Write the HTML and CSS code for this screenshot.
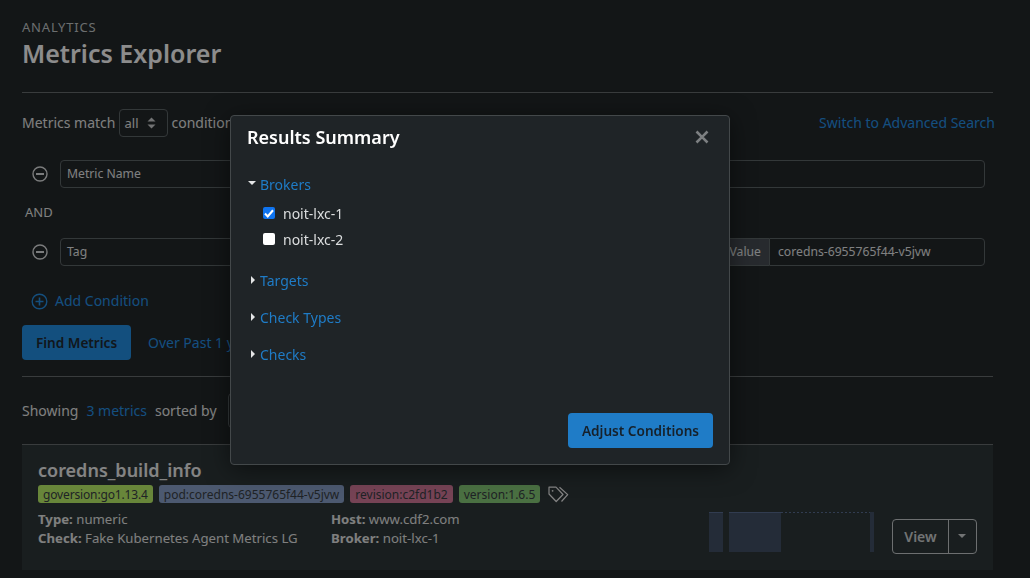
FILE: index.html
```html
<!DOCTYPE html>
<html lang="en">
<head>
  <meta charset="UTF-8">
  <meta name="viewport" content="width=device-width, initial-scale=1.0">
  <title>Metrics Explorer</title>
  <link rel="stylesheet" href="styles.css">
</head>
<body>
  <main class="page">
    <div class="eyebrow">ANALYTICS</div>
    <h1 class="page-title">Metrics Explorer</h1>
    <hr class="rule">

    <div class="match-row">
      <div class="match-left">
        <span>Metrics match</span>
        <span class="select select-all">all
          <svg class="updown" width="9" height="12" viewBox="0 0 9 12"><path d="M4.5 0.5 8.5 4.5H0.5ZM4.5 11.5 0.5 7.5H8.5Z" fill="currentColor"/></svg>
        </span>
        <span>conditions</span>
      </div>
      <a class="link link-advanced">Switch to Advanced Search</a>
    </div>

    <div class="cond-row">
      <svg class="cond-icon" width="16" height="16" viewBox="0 0 16 16"><circle cx="8" cy="8" r="7" fill="none" stroke="currentColor" stroke-width="1.4"/><path d="M4 8h8" stroke="currentColor" stroke-width="2"/></svg>
      <div class="field field-grow">Metric Name</div>
    </div>
    <div class="and-label">AND</div>
    <div class="cond-row">
      <svg class="cond-icon" width="16" height="16" viewBox="0 0 16 16"><circle cx="8" cy="8" r="7" fill="none" stroke="currentColor" stroke-width="1.4"/><path d="M4 8h8" stroke="currentColor" stroke-width="2"/></svg>
      <div class="field-group">
        <div class="field field-grow field-joined">Tag</div>
        <div class="addon">Value</div>
        <div class="field field-value">coredns-6955765f44-v5jvw</div>
      </div>
    </div>

    <a class="add-cond">
      <svg width="17" height="17" viewBox="0 0 17 17"><circle cx="8.5" cy="8.5" r="7.3" fill="none" stroke="currentColor" stroke-width="1.4"/><path d="M4.5 8.5h8M8.5 4.5v8" stroke="currentColor" stroke-width="1.6"/></svg>
      Add Condition
    </a>

    <div class="find-row">
      <button class="btn-primary btn-find">Find Metrics</button>
      <a class="link">Over Past 1 year</a>
    </div>
    <hr class="rule rule-find">

    <div class="showing-row">
      <span>Showing</span>
      <a class="link">3 metrics</a>
      <span>sorted by</span>
      <span class="select select-sort">Name</span>
    </div>

    <section class="card">
      <div class="card-main">
        <h2 class="metric-name">coredns_build_info</h2>
        <div class="tags">
          <span class="tag tag-olive">goversion:go1.13.4</span>
          <span class="tag tag-slate">pod:coredns-6955765f44-v5jvw</span>
          <span class="tag tag-rose">revision:c2fd1b2</span>
          <span class="tag tag-green">version:1.6.5</span>
          <svg class="tag-icon" width="21" height="17" viewBox="0 0 21 17" fill="none" stroke="currentColor" stroke-width="1.2" stroke-linejoin="round"><path d="M1 1.2h7l7 7.3-6.8 7L1 8Z"/><path d="M11.5 1.2 19.7 8.6 13.5 15.5"/><circle cx="4.6" cy="4.8" r="0.9" fill="currentColor" stroke="none"/></svg>
        </div>
        <div class="details">
          <div class="detail-col detail-left">
            <div><b>Type:</b> numeric</div>
            <div><b>Check:</b> Fake Kubernetes Agent Metrics LG</div>
          </div>
          <div class="detail-col">
            <div><b>Host:</b> www.cdf2.com</div>
            <div><b>Broker:</b> noit-lxc-1</div>
          </div>
        </div>
      </div>
      <svg class="spark" width="166" height="40" viewBox="0 0 166 40">
        <path d="M0 0h14v40H0ZM20 0h52v40H20ZM161 0h4v40h-4Z" fill="#435066"/>
        <path d="M0 .5h14M20 .5h52" stroke="#5a6d92"/>
        <path d="M72 .5h89" stroke="#5a6d92" stroke-dasharray="2 2"/>
      </svg>
      <div class="view-btn">
        <span class="view-label">View</span>
        <span class="view-caret"></span>
      </div>
    </section>
  </main>

  <div class="backdrop"></div>

  <div class="modal">
    <div class="modal-head">
      <h3 class="modal-title">Results Summary</h3>
      <svg class="modal-close" width="14" height="14" viewBox="0 0 14 14"><path d="M1.5 1.5l11 11M12.5 1.5l-11 11" stroke="currentColor" stroke-width="2.6"/></svg>
    </div>
    <div class="modal-body">
      <div class="section">
        <div class="section-head"><span class="caret-down"></span><a class="modal-link">Brokers</a></div>
        <div class="check-list">
          <label class="check-item">
            <span class="box box-on">
              <svg width="10" height="9" viewBox="0 0 10 9"><path d="M1 4.6 3.7 7.4 9 1.2" fill="none" stroke="#fff" stroke-width="2.1"/></svg>
            </span>
            noit-lxc-1
          </label>
          <label class="check-item"><span class="box"></span>noit-lxc-2</label>
        </div>
      </div>
      <div class="section"><div class="section-head"><span class="caret-right"></span><a class="modal-link">Targets</a></div></div>
      <div class="section"><div class="section-head"><span class="caret-right"></span><a class="modal-link">Check Types</a></div></div>
      <div class="section"><div class="section-head"><span class="caret-right"></span><a class="modal-link">Checks</a></div></div>
    </div>
    <div class="modal-foot">
      <button class="btn-primary btn-adjust">Adjust Conditions</button>
    </div>
  </div>
</body>
</html>
```

FILE: styles.css
```css
* {
  box-sizing: border-box;
}

html, body {
  height: 100%;
}

body {
  margin: 0;
  background-color: #23282a;
  color: #e8e8e8;
  font-family: "Noto Sans", sans-serif;
  font-size: 14px;
  overflow: hidden;
}

a {
  cursor: pointer;
}

.page {
  padding: 20px 37px 0 22px;
}

.eyebrow {
  font-size: 13px;
  line-height: 15px;
  letter-spacing: 0.8px;
  color: #c4c8ca;
}

.page-title {
  margin: 2px 0 0;
  font-size: 25px;
  line-height: 33px;
  font-weight: 600;
  color: #fff;
}

.rule {
  margin: 22px 0 0;
  border: 0;
  border-top: 1px solid #696e70;
}

.link {
  color: #2691e7;
}

.link-advanced {
  margin-right: -2px;
}

.match-row {
  display: flex;
  justify-content: space-between;
  align-items: center;
  margin-top: 15px;
  height: 29px;
}

.match-left {
  display: flex;
  align-items: center;
  gap: 4px;
}

.select {
  display: inline-flex;
  align-items: center;
  border: 1px solid #5e6669;
  border-radius: 4px;
}

.select-all {
  width: 49px;
  height: 28px;
  margin-right: -1px;
  padding-left: 4px;
  gap: 8px;
  font-size: 13px;
}

.updown {
  color: #d0d2d3;
}

.cond-row {
  display: flex;
  align-items: center;
  gap: 12px;
  margin: 23px 8px 0 10px;
}

.cond-icon {
  flex: none;
  color: #e0e2e3;
}

.field {
  height: 28px;
  padding: 0 6px 1px;
  display: flex;
  align-items: center;
  border: 1px solid #5e6669;
  border-radius: 4px;
  font-size: 12.2px;
  color: #e8eaeb;
}

.field-grow {
  flex: 1;
}

.field-group {
  flex: 1;
  display: flex;
}

.field-joined {
  border-radius: 4px 0 0 4px;
}

.addon {
  height: 28px;
  width: 60px;
  padding: 0 8px 1px;
  display: flex;
  align-items: center;
  justify-content: flex-end;
  background-color: #474e54;
  border-top: 1px solid #5e6669;
  border-bottom: 1px solid #5e6669;
  font-size: 12.2px;
  color: #e8eaeb;
}

.field-value {
  width: 216px;
  padding: 0 8px 1px;
  border-radius: 0 4px 4px 0;
}

.and-label {
  margin: 15px 0 -6px 3px;
  font-size: 13px;
  line-height: 18px;
}

.add-cond {
  display: flex;
  align-items: center;
  gap: 7px;
  margin: 25px 0 0 9px;
  color: #2691e7;
  line-height: 20px;
}

.btn-primary {
  border: 0;
  border-radius: 4px;
  background-color: #1f7cc7;
  color: #16212b;
  font-family: inherit;
  font-size: 13.6px;
  font-weight: 600;
  cursor: pointer;
}

.btn-find {
  width: 109px;
  height: 35px;
  background-color: #2491e5;
  color: #1f2a33;
}

.find-row {
  display: flex;
  align-items: center;
  gap: 17px;
  margin-top: 14px;
}

.rule-find {
  margin-top: 16px;
}

.showing-row {
  display: flex;
  align-items: center;
  gap: 8px;
  margin-top: 15px;
  height: 36px;
}

.select-sort {
  width: 130px;
  height: 35px;
  margin-top: 1px;
  margin-left: 3px;
  padding-left: 8px;
}

.card {
  position: relative;
  display: flex;
  align-items: flex-end;
  height: 126px;
  margin-top: 16px;
  padding: 0 16px 16px;
  background-color: #2f383a;
  border-top: 1px solid #696e70;
}

.card-main {
  align-self: flex-start;
  flex: 1;
  padding-top: 12px;
}

.metric-name {
  margin: 0;
  font-size: 18px;
  line-height: 26px;
  font-weight: 600;
  color: #f0f0f0;
}

.tags {
  display: flex;
  align-items: center;
  gap: 6px;
  margin-top: 2px;
}

.tag {
  height: 18px;
  padding: 0 5px;
  display: flex;
  align-items: center;
  border-radius: 3px;
  font-size: 12px;
  white-space: nowrap;
  color: #3a4045;
}

.tag-olive {
  background-color: #bef46a;
  letter-spacing: -0.15px;
}

.tag-slate {
  background-color: #8aa2cc;
}

.tag-rose {
  background-color: #d87a9c;
}

.tag-green {
  background-color: #88cc78;
}

.tag-icon {
  margin-left: 2px;
  color: #f0f0f0;
}

.details {
  display: flex;
  margin-top: 7px;
  font-size: 13.2px;
  line-height: 19px;
  color: #e8e8e8;
}

.detail-left {
  width: 293px;
}

.spark {
  position: absolute;
  left: 687px;
  top: 67px;
}

.view-btn {
  display: flex;
  align-items: stretch;
  width: 85px;
  height: 35px;
  border: 1px solid #c6cbcd;
  border-radius: 4px;
  color: #d0d3d4;
  font-weight: 600;
}

.view-label {
  width: 56px;
  display: flex;
  align-items: center;
  justify-content: center;
  border-right: 1px solid #c6cbcd;
}

.view-caret {
  flex: 1;
  position: relative;
}

.view-caret::after {
  content: "";
  position: absolute;
  left: 9px;
  top: 14px;
  border-left: 4px solid transparent;
  border-right: 4px solid transparent;
  border-top: 4px solid #d0d3d4;
}

.backdrop {
  position: fixed;
  inset: 0;
  background-color: rgba(0, 0, 0, 0.45);
}

.modal {
  position: absolute;
  left: 230px;
  top: 115px;
  width: 500px;
  height: 350px;
  display: flex;
  flex-direction: column;
  background-color: #1f2427;
  border: 1px solid #43484a;
  border-radius: 4px;
  box-shadow: 0 4px 24px rgba(0, 0, 0, 0.5);
}

.modal-head {
  display: flex;
  justify-content: space-between;
  align-items: center;
  padding: 8px 20px 0 16px;
}

.modal-title {
  margin: 0;
  font-size: 18px;
  line-height: 26px;
  font-weight: 600;
  color: #fff;
}

.modal-close {
  color: #7d8082;
}

.modal-body {
  flex: 1;
  padding: 24px 16px 0;
}

.section {
  margin-bottom: 17px;
}

.section-head {
  display: flex;
  align-items: center;
  height: 20px;
}

.modal-link {
  color: #1f7cc7;
  cursor: pointer;
}

.caret-down {
  width: 0;
  margin: 0 4px 2px 1px;
  border-left: 4px solid transparent;
  border-right: 4px solid transparent;
  border-top: 4px solid #e4e5e6;
}

.caret-right {
  width: 0;
  margin: 0 5px 0 4px;
  border-top: 4px solid transparent;
  border-bottom: 4px solid transparent;
  border-left: 4px solid #e4e5e6;
}

.check-list {
  padding: 6px 0 1px 16px;
}

.check-item {
  display: flex;
  align-items: center;
  gap: 8px;
  height: 26px;
  color: #dcdedf;
}

.box {
  width: 12px;
  height: 12px;
  display: flex;
  align-items: center;
  justify-content: center;
  border-radius: 2px;
  background-color: #fff;
}

.box-on {
  background-color: #0f74f0;
}

.modal-foot {
  display: flex;
  justify-content: flex-end;
  padding: 0 16px 16px;
}

.btn-adjust {
  width: 145px;
  height: 35px;
}
```
